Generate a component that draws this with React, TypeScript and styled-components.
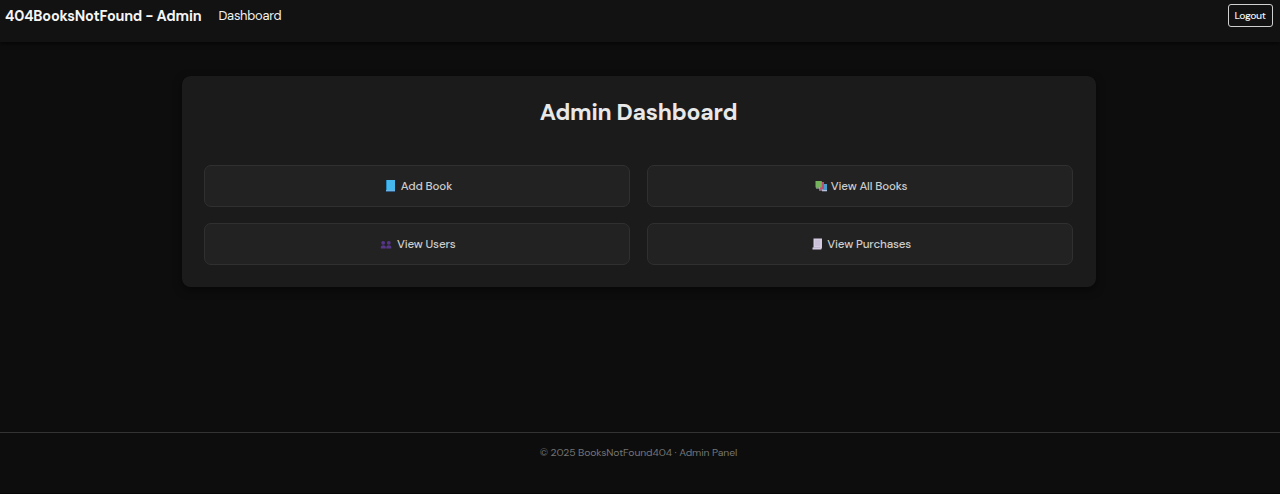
import React from 'react';
import styled, { createGlobalStyle } from 'styled-components';

const GlobalStyle = createGlobalStyle`
  * { box-sizing: border-box; }
  body {
    margin: 0;
    background: #0d0d0d;
    color: #e8e8e8;
    font-family: 'DM Sans', Inter, 'Liberation Sans', sans-serif;
  }
`;

const Page = styled.div`
  display: flex;
  flex-direction: column;
  height: 494px;
  overflow: hidden;
  border-bottom: 1px solid #060606;
`;

const Navbar = styled.header`
  display: flex;
  align-items: flex-start;
  flex: none;
  height: 42px;
  padding: 4px 7.5px 0 5px;
  background: #121212;
  box-shadow: 0 2px 4px rgba(0, 0, 0, 0.6);
`;

const Brand = styled.a`
  width: 213.5px;
  padding-top: 1px;
  font-size: 14.4px;
  font-weight: 700;
  line-height: 23px;
  letter-spacing: -0.18px;
  white-space: nowrap;
  color: #f5f5f5;
`;

const NavLink = styled.a`
  font-size: 12.9px;
  line-height: 23px;
  letter-spacing: -0.25px;
  white-space: nowrap;
  color: #f0f0f0;
`;

const LogoutButton = styled.button`
  width: 45px;
  height: 23px;
  margin-left: auto;
  padding: 0;
  border: 1px solid #d0d0d0;
  border-radius: 3px;
  background: transparent;
  color: #f0f0f0;
  font: 500 10.4px/20px 'DM Sans', Inter, sans-serif;
  letter-spacing: -0.4px;
`;

const Card = styled.main`
  flex: none;
  width: 914px;
  height: 211px;
  margin: 34px 0 0 181.5px;
  padding: 21px 22.5px 0;
  border-radius: 8.6px;
  background: #1b1b1b;
  box-shadow: 0 3px 9px rgba(0, 0, 0, 0.5);
`;

const Title = styled.h1`
  margin: 0 0 38px;
  font-size: 23px;
  font-weight: 700;
  line-height: 30px;
  letter-spacing: -0.27px;
  text-align: center;
  white-space: nowrap;
  color: #e8e8e8;
`;

const Grid = styled.nav`
  display: grid;
  grid-template-columns: 1fr 1fr;
  grid-auto-rows: 42px;
  gap: 16px 17px;
`;

const Tile = styled.a`
  display: flex;
  align-items: center;
  justify-content: center;
  padding-left: 2px;
  border: 1px solid #303030;
  border-radius: 7px;
  background: #222222;
`;

const Icon = styled.svg<{ $gap: number }>`
  flex: none;
  width: 12px;
  height: 12px;
  margin-right: ${(p) => p.$gap}px;
`;

const TileLabel = styled.span`
  font-size: 11.6px;
  font-weight: 500;
  letter-spacing: -0.14px;
  white-space: nowrap;
  color: #cccccc;
`;

const Footer = styled.footer`
  flex: 1;
  margin-top: 145px;
  padding: 12px 3px 0 0;
  border-top: 1px solid #333333;
  font-size: 10.4px;
  line-height: 15px;
  letter-spacing: -0.11px;
  text-align: center;
  white-space: nowrap;
  color: #747474;
`;

const Book = () => (
  <>
    <path d="M2 0h9v12H2z" fill="#2789bd" />
    <path d="M3 0h8v10H3z" fill="#45b9ee" />
    <path d="M2 10h9v1H2z" fill="#6fb4e0" />
    <path d="M2 11h9v1H2z" fill="#315e8b" />
  </>
);

const Books = () => (
  <>
    <path d="M7 4h5v6H7z" fill="#4a9ccc" />
    <path d="M7 10h5v1.3H7z" fill="#b5c4df" />
    <path d="M4 2h5v7.5H4z" fill="#b94e73" />
    <path d="M4 9.5h4.5v1H4z" fill="#c9a7b9" />
    <path d="M0.5 1H6.8v6.5H0.5z" fill="#75b45b" />
    <path d="M1 7.5h4v1H1z" fill="#b3d3b8" />
  </>
);

const Users = () => (
  <g fill="#57368a">
    <circle cx="3.2" cy="4.8" r="1.9" />
    <circle cx="8.8" cy="4.8" r="1.9" />
    <path d="M0.8 10.6V9q0-1.8 2.5-1.8T5.8 9v1.6zM6.3 10.6V9q0-1.8 2.5-1.8T11.3 9v1.6z" />
  </g>
);

const Receipt = () => (
  <>
    <path d="M2.5 0.5H11v9l-.7 2H1.5V9.6h1z" fill="#d5cce2" />
    <path d="M4 3h5M4 5h5M4 7h5M3 9.5h6" stroke="#b3a8c5" strokeWidth="0.6" />
  </>
);

const tiles = [
  { label: 'Add Book', Art: Book, gap: 5 },
  { label: 'View All Books', Art: Books, gap: 4 },
  { label: 'View Users', Art: Users, gap: 4.5 },
  { label: 'View Purchases', Art: Receipt, gap: 4.5 },
];

export default function App() {
  return (
    <>
      <GlobalStyle />
      <Page>
        <Navbar>
          <Brand>404BooksNotFound - Admin</Brand>
          <NavLink>Dashboard</NavLink>
          <LogoutButton>Logout</LogoutButton>
        </Navbar>
        <Card>
          <Title>Admin Dashboard</Title>
          <Grid>
            {tiles.map(({ label, Art, gap }) => (
              <Tile key={label}>
                <Icon viewBox="0 0 12 12" $gap={gap} aria-hidden="true">
                  <Art />
                </Icon>
                <TileLabel>{label}</TileLabel>
              </Tile>
            ))}
          </Grid>
        </Card>
        <Footer>© 2025 BooksNotFound404 · Admin Panel</Footer>
      </Page>
    </>
  );
}
